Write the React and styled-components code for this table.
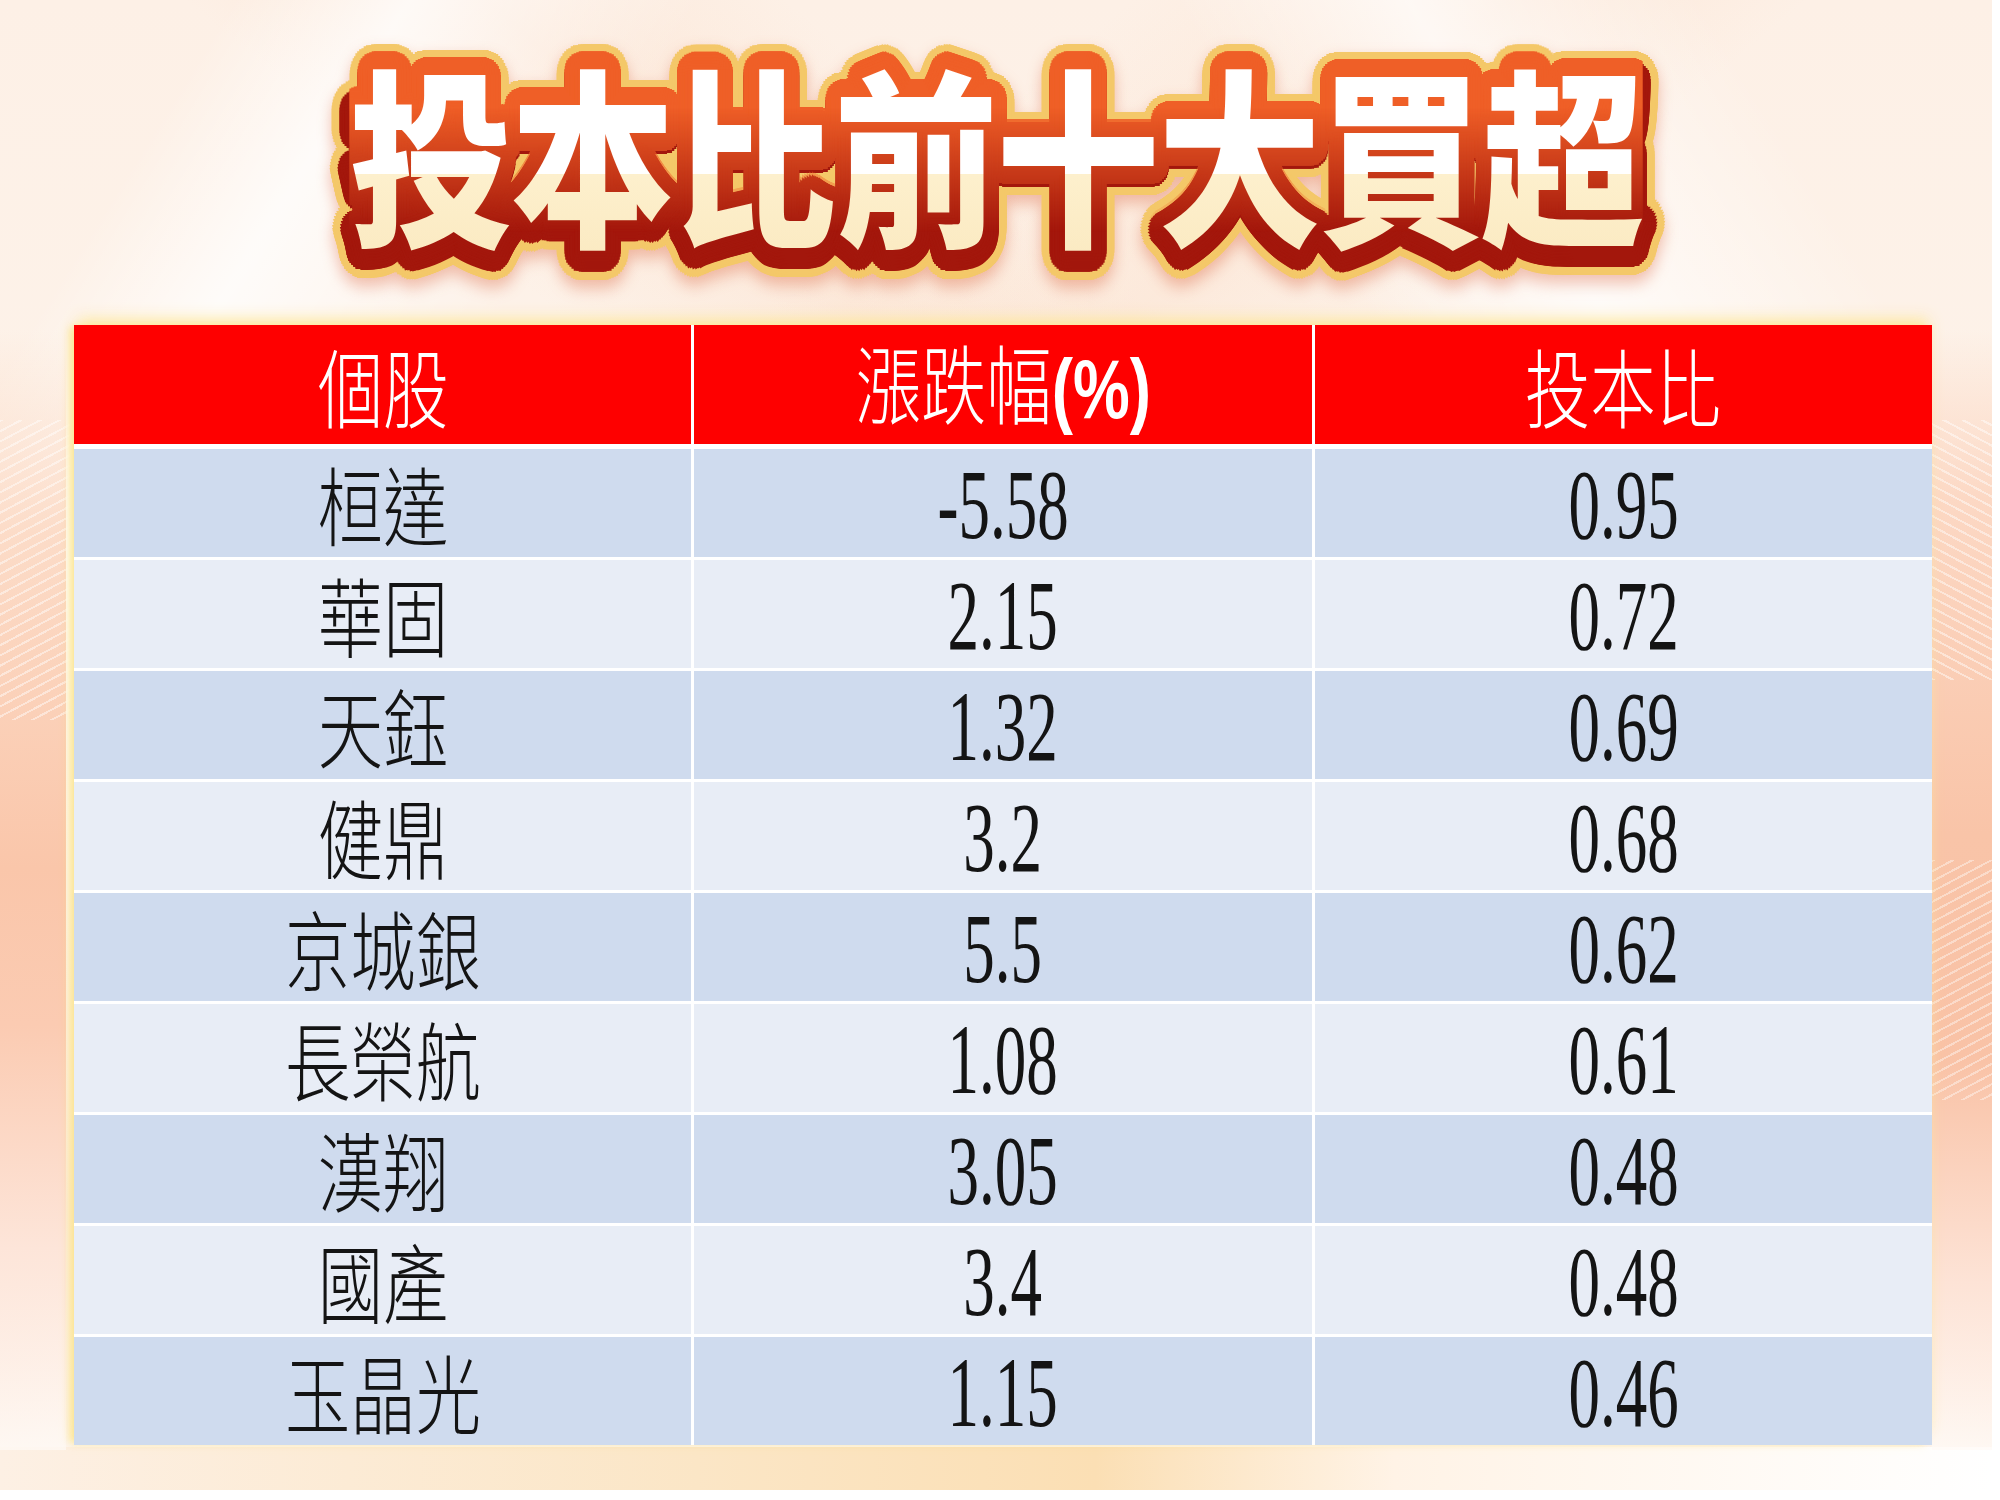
import React from "react";
import styled, { createGlobalStyle, css } from "styled-components";

const GlobalStyle = createGlobalStyle`
  html, body {
    margin: 0;
    padding: 0;
    background: #ffffff;
  }
  body {
    width: 2000px;
    height: 1500px;
    overflow: hidden;
    font-family: "Liberation Serif", "Noto Sans CJK TC", serif;
  }
`;

// round outline built from rings of text shadows (no miter spikes)
const ring = (radius, color, dy = 0) => {
  const out = [];
  for (let r = 3; r <= radius; r += 3) {
    const n = Math.ceil((2 * Math.PI * r) / 3);
    for (let i = 0; i < n; i++) {
      const a = (i / n) * Math.PI * 2;
      const x = (Math.cos(a) * r).toFixed(1);
      const y = (Math.sin(a) * r + dy).toFixed(1);
      out.push(`${x}px ${y}px 0 ${color}`);
    }
  }
  return out.join(", ");
};

const GOLD_RING = ring(27, "#f4c869", 2);
const DARK_RING = ring(19, "#a3170c", 3);
const ORANGE_RING = ring(18, "#ef5f27", 0);

const rows = [
  ["桓達", "-5.58", "0.95"],
  ["華固", "2.15", "0.72"],
  ["天鈺", "1.32", "0.69"],
  ["健鼎", "3.2", "0.68"],
  ["京城銀", "5.5", "0.62"],
  ["長榮航", "1.08", "0.61"],
  ["漢翔", "3.05", "0.48"],
  ["國產", "3.4", "0.48"],
  ["玉晶光", "1.15", "0.46"],
];

const Stage = styled.div`
  width: 1992px;
  height: 1490px;
  display: flex;
  flex-direction: column;
  background:
    repeating-linear-gradient(152deg, rgba(255, 255, 255, 0.45) 0 2px, rgba(255, 255, 255, 0) 2px 9px) 0 420px / 70px 300px no-repeat,
    repeating-linear-gradient(28deg, rgba(255, 255, 255, 0.45) 0 2px, rgba(255, 255, 255, 0) 2px 9px) 1932px 420px / 60px 260px no-repeat,
    repeating-linear-gradient(152deg, rgba(255, 255, 255, 0.4) 0 2px, rgba(255, 255, 255, 0) 2px 9px) 1932px 860px / 60px 240px no-repeat,
    linear-gradient(180deg, rgba(252, 224, 206, 0) 0%, #fcdcc8 18%, #fac6aa 48%, #fbcbb2 62%, #fde5d9 82%, rgba(255, 250, 246, 0.7) 100%) 0 330px / 66px 1120px no-repeat,
    linear-gradient(180deg, rgba(252, 224, 206, 0) 0%, #fcd8c4 15%, #f9c4a8 45%, #f9c2a6 65%, #fde3d6 85%, rgba(255, 250, 246, 0.7) 100%) 1932px 330px / 60px 1120px no-repeat,
    linear-gradient(90deg, #fdf0e4 0%, #fbe6c6 35%, #fbdfb4 55%, #fff3e6 70%, #ffffff 100%) 0 1447px / 100% 43px no-repeat,
    linear-gradient(122deg, rgba(255, 255, 255, 0) 8%, rgba(255, 255, 255, 0.75) 14%, rgba(255, 255, 255, 0) 24%),
    linear-gradient(58deg, rgba(255, 255, 255, 0) 72%, rgba(255, 255, 255, 0.7) 80%, rgba(255, 255, 255, 0) 90%),
    linear-gradient(140deg, rgba(250, 214, 188, 0) 30%, rgba(250, 214, 188, 0.3) 40%, rgba(250, 214, 188, 0) 48%),
    linear-gradient(40deg, rgba(250, 214, 188, 0) 52%, rgba(250, 214, 188, 0.3) 60%, rgba(250, 214, 188, 0) 68%),
    linear-gradient(180deg, #fdf0e6 0%, #fdf3ea 40%, #fdf5ee 100%);
`;

const Masthead = styled.header`
  height: 325px;
  flex: none;
  display: flex;
  justify-content: center;
  align-items: flex-start;
  padding-top: 42px;
  box-sizing: border-box;
`;

const TitleStack = styled.h1`
  position: relative;
  margin: 0;
  font-family: "Noto Sans CJK TC", "Noto Sans CJK SC", sans-serif;
  font-weight: 900;
  font-size: 190px;
  line-height: 216px;
  letter-spacing: -2px;
  white-space: nowrap;
  transform: scaleX(0.86);
`;

const layerLook = {
  gold: css`
    color: #f4c869;
    text-shadow: ${GOLD_RING};
    filter: drop-shadow(0 8px 8px rgba(214, 80, 40, 0.35));
  `,
  dark: css`
    color: #a3170c;
    text-shadow: ${DARK_RING};
  `,
  orange: css`
    color: #ef5f27;
    text-shadow: ${ORANGE_RING};
    -webkit-mask-image: linear-gradient(180deg, #000 0%, #000 30%, rgba(0, 0, 0, 0) 88%);
    mask-image: linear-gradient(180deg, #000 0%, #000 30%, rgba(0, 0, 0, 0) 88%);
  `,
};

const TitleLayer = styled.span`
  position: absolute;
  inset: 0;
  ${({ $look }) => layerLook[$look]}
`;

const TitleFill = styled.span`
  position: relative;
  display: block;
  color: transparent;
  background: linear-gradient(180deg, #ffffff 0%, #ffffff 61%, #fdf0cd 61%, #fbeac2 100%);
  -webkit-background-clip: text;
  background-clip: text;
`;

const TableArea = styled.main`
  padding: 0 60px 0 74px;
`;

const Grid = styled.div`
  display: grid;
  grid-template-columns: repeat(3, 1fr);
  grid-template-rows: 121px repeat(9, 108px);
  column-gap: 3px;
  row-gap: 3px;
  background: #ffffff;
  box-shadow: 0 -10px 14px -4px rgba(253, 232, 160, 0.95), -6px 0 8px -2px rgba(253, 226, 120, 0.8);
`;

const tones = {
  head: "#fe0000",
  odd: "#cfdbee",
  even: "#e8edf6",
};

const Cell = styled.div`
  display: flex;
  align-items: center;
  justify-content: center;
  background: ${({ $tone }) => tones[$tone]};
  color: ${({ $tone }) => ($tone === "head" ? "#ffffff" : "#141414")};
  ${({ $tone }) => $tone === "head" && "margin-bottom: 2px;"}
`;

const Label = styled.span`
  display: inline-block;
  white-space: nowrap;
  ${({ $kind }) =>
    $kind === "num"
      ? css`
          font-family: "Liberation Serif", serif;
          font-size: 100px;
          line-height: 104px;
          transform: scaleX(0.63);
          margin-top: 4px;
        `
      : css`
          font-family: "Noto Sans CJK TC", "Noto Sans CJK SC", sans-serif;
          font-weight: 300;
          font-size: 86px;
          line-height: 96px;
          transform: scaleX(0.76);
        `}
`;

const Paren = styled.span`
  font-family: "Liberation Sans", sans-serif;
  font-weight: 700;
  font-size: 84px;
`;

const Title = ({ text }) => (
  <TitleStack>
    <TitleLayer $look="gold" aria-hidden="true">{text}</TitleLayer>
    <TitleLayer $look="dark" aria-hidden="true">{text}</TitleLayer>
    <TitleLayer $look="orange" aria-hidden="true">{text}</TitleLayer>
    <TitleFill>{text}</TitleFill>
  </TitleStack>
);

export default function App() {
  return (
    <>
      <GlobalStyle />
      <Stage>
        <Masthead>
          <Title text="投本比前十大買超" />
        </Masthead>
        <TableArea>
          <Grid>
            <Cell $tone="head">
              <Label>個股</Label>
            </Cell>
            <Cell $tone="head">
              <Label>
                漲跌幅<Paren>(%)</Paren>
              </Label>
            </Cell>
            <Cell $tone="head">
              <Label>投本比</Label>
            </Cell>
            {rows.map(([name, change, ratio], i) => {
              const tone = i % 2 === 0 ? "odd" : "even";
              return (
                <React.Fragment key={name}>
                  <Cell $tone={tone}>
                    <Label>{name}</Label>
                  </Cell>
                  <Cell $tone={tone}>
                    <Label $kind="num">{change}</Label>
                  </Cell>
                  <Cell $tone={tone}>
                    <Label $kind="num">{ratio}</Label>
                  </Cell>
                </React.Fragment>
              );
            })}
          </Grid>
        </TableArea>
      </Stage>
    </>
  );
}
